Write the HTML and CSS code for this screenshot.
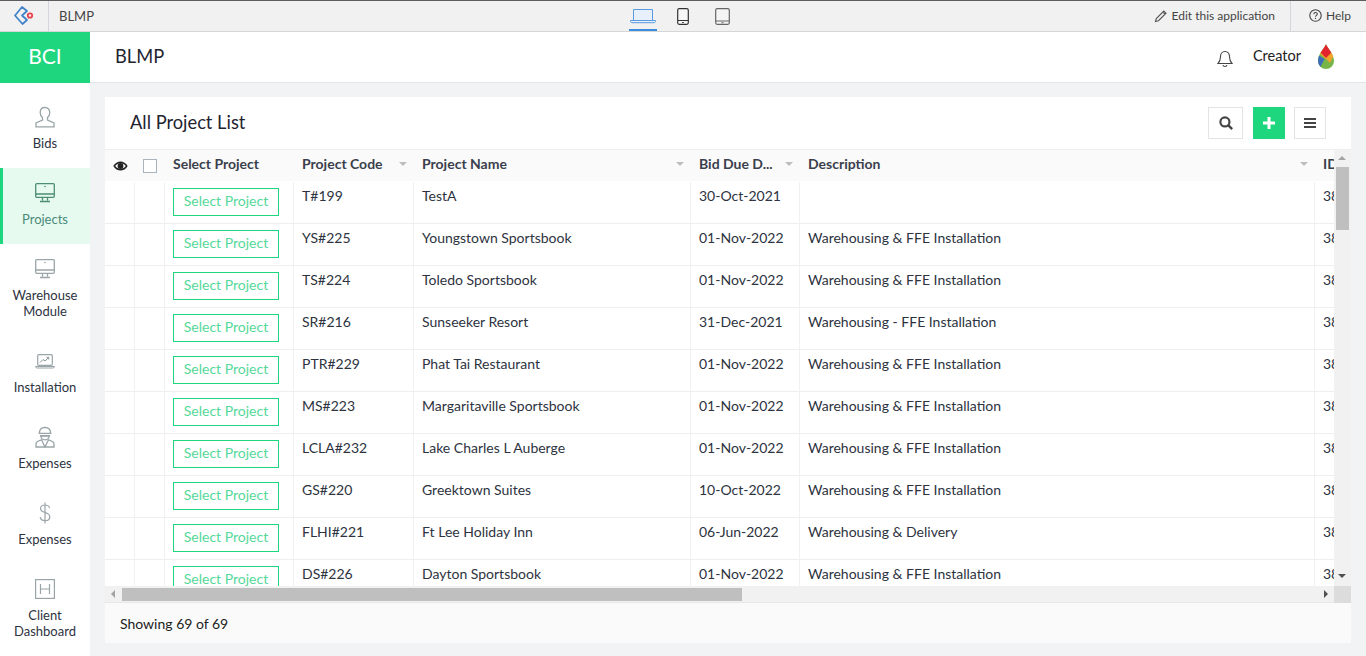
FILE: index.html
```html
<!DOCTYPE html>
<html>
  <head>
    <meta charset="utf-8">
    <title>BLMP</title>
    <link rel="stylesheet" href="styles.css">
  </head>
  <body>
    <!-- top strip -->
    <div class="topbar">
      <div class="top-logo">
        <svg width="20" height="20" viewBox="0 0 20 20"><path d="M8 1 1 9.500 8.500 18 13 14 8 9.500 13 5z" fill="none" stroke="#3f82c9" stroke-width="1.700" stroke-linejoin="round"/><circle cx="16" cy="9.500" r="2.200" fill="none" stroke="#e8424a" stroke-width="1.800"/></svg>
      </div>
      <div class="top-name">BLMP</div>
      <div class="devices">
        <div class="device active">
          <svg width="26" height="16" viewBox="0 0 26 16"><path d="M3.500 1.500h19v11h-19z" fill="#e8f1fb" stroke="#5a9be0"/><path d="M.5 12.500h25v1.200l-1 1h-23l-1-1z" fill="#e8f1fb" stroke="#5a9be0"/></svg>
        </div>
        <div class="device">
          <svg width="12" height="17" viewBox="0 0 12 17"><rect x=".7" y=".7" width="10.600" height="15.600" rx="1.500" fill="#f7f7f7" stroke="#333" stroke-width="1.200"/><path d="M1 12.500h10" stroke="#333"/><path d="M5 14.500h2" stroke="#555"/></svg>
        </div>
        <div class="device">
          <svg width="15" height="17" viewBox="0 0 15 17"><rect x=".7" y=".7" width="13.600" height="15.600" rx="1.500" fill="#f5f5f5" stroke="#666" stroke-width="1.200"/><path d="M1 13h13" stroke="#666"/><path d="M6.500 14.700h2" stroke="#666"/></svg>
        </div>
      </div>
      <div class="top-edit">
        <svg width="14" height="14" viewBox="0 0 14 14"><path d="M1.500 12.500l.8-3L9.800 2l2.200 2.200-7.500 7.500zM8.800 3l2.200 2.200" fill="none" stroke="#555" stroke-width="1.100"/></svg>
        <span>Edit this application</span>
      </div>
      <div class="top-help">
        <svg width="13" height="13" viewBox="0 0 13 13"><circle cx="6.500" cy="6.500" r="5.700" fill="none" stroke="#444" stroke-width="1.100"/><path d="M4.800 5.200c0-2.200 3.500-2.200 3.500-.1 0 1.300-1.800 1.300-1.800 2.700" fill="none" stroke="#444" stroke-width="1.100"/><path d="M6.500 8.800v1.200" stroke="#444" stroke-width="1.100"/></svg>
        <span>Help</span>
      </div>
    </div>

    <!-- app header -->
    <div class="header">
      <div class="brand">BCI</div>
      <div class="app-name">BLMP</div>
      <div class="header-right">
        <svg class="bell" width="16" height="18" viewBox="0 0 16 18"><path d="M8 1.500c-3 0-4.500 2.300-4.500 5 0 4-1 5.500-2.500 7h14c-1.500-1.500-2.500-3-2.500-7 0-2.700-1.500-5-4.500-5zM6 15c.3 2 3.700 2 4 0" fill="none" stroke="#444" stroke-width="1.100"/></svg>
        <span class="creator">Creator</span>
        <svg class="drop" width="16" height="25" viewBox="0 0 16 25">
          <clipPath id="dropShape"><path d="M8 0C10 5 16 10 16 17A8 8 0 0 1 0 17C0 10 6 5 8 0z"/></clipPath>
          <g clip-path="url(#dropShape)">
            <path d="M0 0h16v25H0z" fill="#77b548"/>
            <path d="M0 11 6.500 15 2 24 0 24z" fill="#3d6fb8"/>
            <path d="M1 9 8 15 12 19 16 11 12 7 3 7z" fill="#f0a42c"/>
            <path d="M8 0 14 8 8 14 2 8z" fill="#e3262e"/>
          </g>
        </svg>
      </div>
    </div>

    <div class="main">
      <!-- left menu -->
      <div class="sidebar">
        <div class="nav-item">
          <svg width="20" height="22" viewBox="0 0 20 22"><path d="M10 1.500c-3 0-4.800 2.200-4.800 5 0 2.300 1 4 2.300 5v2.500L1 17v3.800h18V17l-6.500-3v-2.500c1.300-1 2.300-2.700 2.300-5 0-2.800-1.800-5-4.800-5z" fill="none" stroke="#9aa5a8" stroke-width="1.300"/></svg>
          <div class="nav-label">Bids</div>
        </div>
        <div class="nav-item active">
          <svg width="20" height="20" viewBox="0 0 20 20"><rect x=".7" y=".7" width="18.600" height="13.600" rx="1" fill="none" stroke="#4e8f73" stroke-width="1.300"/><path d="M1 11h18M7.500 14.500v3M12.500 14.500v3M5 18.500h10" stroke="#4e8f73" stroke-width="1.300"/><circle cx="10" cy="3.500" r=".8" fill="#4e8f73"/></svg>
          <div class="nav-label">Projects</div>
        </div>
        <div class="nav-item">
          <svg width="20" height="20" viewBox="0 0 20 20"><rect x=".7" y=".7" width="18.600" height="13.600" rx="1" fill="none" stroke="#9aa5a8" stroke-width="1.300"/><path d="M1 11h18M7.500 14.500v3M12.500 14.500v3M5 18.500h10" stroke="#9aa5a8" stroke-width="1.300"/><circle cx="10" cy="3.500" r=".8" fill="#9aa5a8"/></svg>
          <div class="nav-label">Warehouse Module</div>
        </div>
        <div class="nav-item">
          <svg width="20" height="16" viewBox="0 0 20 16"><rect x="2.700" y="1.700" width="14.600" height="10.600" rx="1" fill="none" stroke="#9aa5a8" stroke-width="1.200"/><path d="M.5 13.500h19l-1 1.500h-17z" fill="none" stroke="#9aa5a8"/><path d="M5 9.500l3-3 2 1.500 3.500-3.500M11.500 4.300h2.200v2.200" fill="none" stroke="#8a9598"/></svg>
          <div class="nav-label">Installation</div>
        </div>
        <div class="nav-item">
          <svg width="20" height="21" viewBox="0 0 20 21"><path d="M4.500 7.500C4 2.800 6.500 1 10 1s6 1.800 5.500 6.500M3.500 6.800h13M5.500 8.500c.3 3.200 2.200 4.800 4.500 4.800s4.200-1.600 4.500-4.800" fill="none" stroke="#9aa5a8" stroke-width="1.300"/><path d="M5.500 8.500h9v1.800h-9z" fill="#9aa5a8"/><path d="M1 20.500v-3c0-2 3-3.500 5.500-4.200L10 20.500l3.500-7.200c2.500.7 5.500 2.200 5.500 4.200v3z" fill="none" stroke="#9aa5a8" stroke-width="1.300"/></svg>
          <div class="nav-label">Expenses</div>
        </div>
        <div class="nav-item">
          <svg width="12" height="22" viewBox="0 0 12 22"><path d="M10.500 6c-.3-2-2-3-4.500-3S1.500 4.300 1.500 6.500 3.500 9.800 6 10.500s4.800 1.700 4.800 4.200S8.700 18.700 6 18.700s-4.500-1.300-4.800-3.500M6 .5v21" fill="none" stroke="#9aa5a8" stroke-width="1.200"/></svg>
          <div class="nav-label">Expenses</div>
        </div>
        <div class="nav-item">
          <svg width="20" height="20" viewBox="0 0 20 20"><rect x=".6" y=".6" width="18.800" height="18.800" fill="none" stroke="#9aa5a8" stroke-width="1.200"/><path d="M5.500 5v10M14.500 5v10M5.500 10h9" fill="none" stroke="#9aa5a8" stroke-width="1.200"/></svg>
          <div class="nav-label">Client Dashboard</div>
        </div>
      </div>

      <div class="content">
        <div class="card">
          <div class="card-head">
            <div class="card-title">All Project List</div>
            <div class="tools">
              <div class="tool tool-search">
                <svg width="14" height="14" viewBox="0 0 13 13"><circle cx="5.500" cy="5.500" r="4.200" fill="none" stroke="#444" stroke-width="2"/><path d="M8.500 8.500l3.700 3.700" stroke="#444" stroke-width="2.200"/></svg>
              </div>
              <div class="tool tool-add">
                <svg width="12" height="12" viewBox="0 0 12 12"><path d="M6 0v12M0 6h12" stroke="#fff" stroke-width="3"/></svg>
              </div>
              <div class="tool tool-menu">
                <svg width="12" height="10" viewBox="0 0 12 10"><path d="M0 1h12M0 5h12M0 9h12" stroke="#444" stroke-width="1.800"/></svg>
              </div>
            </div>
          </div>

          <div class="grid-wrap">
            <div class="table-view">
              <table class="list">
                <colgroup>
                  <col class="c-eye"><col class="c-check"><col class="c-select"><col class="c-code"><col class="c-name"><col class="c-date"><col class="c-desc"><col class="c-id">
                </colgroup>
                <thead>
                  <tr>
                    <th class="center"><svg width="15" height="10" viewBox="0 0 15 10"><path d="M.3 5c3.500-6 10.900-6 14.400 0-3.500 6-10.900 6-14.400 0z" fill="#222"/><path d="M2.200 5c2.800-3.700 7.800-3.700 10.600 0-2.800 3.700-7.800 3.700-10.600 0z" fill="#fff"/><circle cx="7.500" cy="5" r="2.900" fill="#222"/></svg></th>
                    <th class="center"><span class="checkbox"></span></th>
                    <th><div class="th-text">Select Project</div></th>
                    <th><div class="th-in">Project Code<i class="caret"></i></div></th>
                    <th><div class="th-in">Project Name<i class="caret"></i></div></th>
                    <th><div class="th-in">Bid Due D...<i class="caret"></i></div></th>
                    <th><div class="th-in">Description<i class="caret"></i></div></th>
                    <th><div class="th-text">ID</div></th>
                  </tr>
                </thead>
                <tbody>
                  <tr><td></td><td></td><td><a class="pick">Select Project</a></td><td>T#199</td><td>TestA</td><td>30-Oct-2021</td><td></td><td>3800000</td></tr>
                  <tr><td></td><td></td><td><a class="pick">Select Project</a></td><td>YS#225</td><td>Youngstown Sportsbook</td><td>01-Nov-2022</td><td>Warehousing &amp; FFE Installation</td><td>3800000</td></tr>
                  <tr><td></td><td></td><td><a class="pick">Select Project</a></td><td>TS#224</td><td>Toledo Sportsbook</td><td>01-Nov-2022</td><td>Warehousing &amp; FFE Installation</td><td>3800000</td></tr>
                  <tr><td></td><td></td><td><a class="pick">Select Project</a></td><td>SR#216</td><td>Sunseeker Resort</td><td>31-Dec-2021</td><td>Warehousing - FFE Installation</td><td>3800000</td></tr>
                  <tr><td></td><td></td><td><a class="pick">Select Project</a></td><td>PTR#229</td><td>Phat Tai Restaurant</td><td>01-Nov-2022</td><td>Warehousing &amp; FFE Installation</td><td>3800000</td></tr>
                  <tr><td></td><td></td><td><a class="pick">Select Project</a></td><td>MS#223</td><td>Margaritaville Sportsbook</td><td>01-Nov-2022</td><td>Warehousing &amp; FFE Installation</td><td>3800000</td></tr>
                  <tr><td></td><td></td><td><a class="pick">Select Project</a></td><td>LCLA#232</td><td>Lake Charles L Auberge</td><td>01-Nov-2022</td><td>Warehousing &amp; FFE Installation</td><td>3800000</td></tr>
                  <tr><td></td><td></td><td><a class="pick">Select Project</a></td><td>GS#220</td><td>Greektown Suites</td><td>10-Oct-2022</td><td>Warehousing &amp; FFE Installation</td><td>3800000</td></tr>
                  <tr><td></td><td></td><td><a class="pick">Select Project</a></td><td>FLHI#221</td><td>Ft Lee Holiday Inn</td><td>06-Jun-2022</td><td>Warehousing &amp; Delivery</td><td>3800000</td></tr>
                  <tr><td></td><td></td><td><a class="pick">Select Project</a></td><td>DS#226</td><td>Dayton Sportsbook</td><td>01-Nov-2022</td><td>Warehousing &amp; FFE Installation</td><td>3800000</td></tr>
                </tbody>
              </table>
            </div>
            <!-- scrollbars -->
            <div class="vbar">
              <i class="arrow-up"></i>
              <div class="vthumb"></div>
              <i class="arrow-down"></i>
            </div>
            <div class="hbar">
              <i class="arrow-left"></i>
              <div class="htrack"><div class="hthumb"></div></div>
              <i class="arrow-right"></i>
            </div>
            <div class="corner"></div>
          </div>

          <div class="card-foot">Showing 69 of 69</div>
        </div>
      </div>
    </div>
  </body>
</html>
```

FILE: styles.css
```css
* {
  box-sizing: border-box;
}
html, body {
  margin: 0;
  height: 656px;
  overflow: hidden;
}
body {
  font-family: Lato, "Liberation Sans", sans-serif;
  font-size: 14px;
  color: #2d3340;
  background: #f2f3f5;
  display: flex;
  flex-direction: column;
}

/* top strip */
.topbar {
  height: 32px;
  display: flex;
  align-items: center;
  background: #f1f1f1;
  border-top: 1px solid #5c5c5c;
  border-bottom: 1px solid #d6d6d6;
  position: relative;
  font-size: 12px;
  color: #444;
}
.top-logo {
  width: 49px;
  height: 30px;
  display: flex;
  align-items: center;
  justify-content: center;
  border-right: 1px solid #d4d6de;
}
.top-name {
  margin-left: 10px;
  font-size: 13px;
  color: #444;
}
.devices {
  position: absolute;
  left: 629px;
  top: 0;
  height: 30px;
  display: flex;
}
.device {
  height: 30px;
  display: flex;
  align-items: center;
  justify-content: center;
  width: 28px;
  margin-right: 11px;
}
.device:nth-child(2) {
  margin-left: 1px;
}
.device.active {
  border-bottom: 2px solid #3b8de0;
  padding-top: 2px;
}
.top-edit {
  margin-left: auto;
  height: 30px;
  padding-right: 15px;
  padding-bottom: 1px;
  display: flex;
  align-items: center;
  gap: 4px;
  border-right: 1px solid #d4d6de;
}
.top-help {
  width: 75px;
  padding-left: 18px;
  padding-bottom: 1px;
  display: flex;
  align-items: center;
  gap: 4px;
}

/* app header */
.header {
  height: 51px;
  display: flex;
  align-items: stretch;
  background: #fff;
  border-bottom: 1px solid #e4e5e7;
}
.brand {
  width: 90px;
  margin-bottom: -1px;
  padding-bottom: 5px;
  background: #1ed67e;
  color: #fff;
  font-size: 21px;
  display: flex;
  align-items: center;
  justify-content: center;
}
.app-name {
  margin-left: 25px;
  font-size: 18.300px;
  color: #1f2430;
  line-height: 48px;
}
.header-right {
  margin-left: auto;
  padding-right: 32px;
  padding-bottom: 3px;
  display: flex;
  align-items: center;
}
.bell {
  margin-top: 6px;
  margin-right: 20px;
}
.creator {
  font-size: 14.500px;
  color: #222;
  margin-right: 17px;
}
.drop {
  margin-top: 1px;
}

/* left menu */
.main {
  flex: 1;
  display: flex;
  min-height: 0;
}
.sidebar {
  width: 90px;
  background: #fff;
  padding-top: 9px;
  flex: none;
}
.nav-item {
  height: 76px;
  padding: 0 8px;
  display: flex;
  flex-direction: column;
  align-items: center;
  text-align: center;
  justify-content: flex-start;
}
.nav-item svg {
  height: 28px;
  margin-top: 11px;
  margin-bottom: 4px;
  flex: none;
}
.nav-item:nth-child(3), .nav-item:nth-child(7) {
  height: 92px;
}
.nav-item.active {
  background: #e6faf0;
  border-left: 3px solid #1ed67e;
  padding-left: 5px;
  padding-right: 8px;
  color: #4b8a78;
}
.nav-label {
  font-size: 13px;
  line-height: 16px;
}

/* card */
.content {
  flex: 1;
  padding: 14px 15px 13px;
  min-width: 0;
}
.card {
  height: 546px;
  background: #fff;
  display: flex;
  flex-direction: column;
}
.card-head {
  height: 53px;
  flex: none;
  display: flex;
  align-items: flex-start;
  padding: 10px 25px 0;
  border-bottom: 1px solid #eee;
}
.card-title {
  font-size: 18.300px;
  line-height: 30px;
  color: #1f2430;
}
.tools {
  margin-left: auto;
  display: flex;
}
.tool {
  height: 32px;
  display: flex;
  align-items: center;
  justify-content: center;
  border: 1px solid #e3e3e3;
}
.tool-search {
  width: 35px;
}
.tool-add {
  width: 32px;
  margin-left: 10px;
  margin-right: 9px;
  background: #1ed67e;
  border-color: #1ed67e;
}
.tool-menu {
  width: 32px;
}

/* table with its scrollbars */
.grid-wrap {
  flex: 1;
  min-height: 0;
  display: grid;
  grid-template-columns: 1fr 17px;
  grid-template-rows: 436px 17px;
}
.table-view {
  overflow: hidden;
  min-width: 0;
}
.list {
  table-layout: fixed;
  width: 1289px;
  border-collapse: separate;
  border-spacing: 0;
}
.c-eye, .c-check { width: 30px; }
.c-select { width: 129px; }
.c-code { width: 120px; }
.c-name { width: 277px; }
.c-date { width: 109px; }
.c-desc { width: 515px; }
.c-id { width: 79px; }
.list th {
  height: 32px;
  padding: 0 8px;
  background: #fafafa;
  border-bottom: 1px solid #fff;
  font-weight: 700;
  font-size: 14px;
  text-align: left;
  white-space: nowrap;
  overflow: hidden;
  color: #3a3f4c;
}
.list th.center {
  padding: 0;
  text-align: center;
}
.list th svg {
  display: block;
  margin: 0 auto;
}
.th-text, .th-in {
  padding-bottom: 5px;
}
.th-in {
  display: flex;
  align-items: center;
  justify-content: space-between;
}
.caret {
  width: 0;
  height: 0;
  border-left: 4px solid transparent;
  border-right: 4px solid transparent;
  border-top: 4px solid #bdbdbd;
  margin-top: 2px;
  margin-right: -1px;
}
.checkbox {
  display: block;
  width: 14px;
  height: 14px;
  margin: 0 auto;
  background: #fff;
  border: 1px solid #a9b4bf;
}
.list td {
  height: 42px;
  padding: 6px 8px 0;
  vertical-align: top;
  line-height: 16px;
  white-space: nowrap;
  overflow: hidden;
  border-bottom: 1px solid #eee;
  border-right: 1px solid #f1f1f1;
}
.pick {
  display: block;
  height: 28px;
  width: 106px;
  border: 1px solid #1ed67e;
  color: #55d99a;
  text-align: center;
  line-height: 24px;
}

/* scrollbars */
.vbar {
  grid-column: 2;
  grid-row: 1;
  background: #f1f1f1;
  position: relative;
}
.vthumb {
  position: absolute;
  left: 2px;
  top: 17px;
  width: 13px;
  height: 63px;
  background: #bfbfbf;
}
.hbar {
  grid-column: 1;
  grid-row: 2;
  background: #f1f1f1;
  border-bottom: 1px solid #e8e8e8;
  position: relative;
}
.htrack {
  position: absolute;
  left: 17px;
  top: 2px;
  width: 620px;
}
.hthumb {
  height: 13px;
  background: #bfbfbf;
}
.corner {
  grid-column: 2;
  grid-row: 2;
  background: #dcdcdc;
}
.arrow-up, .arrow-down, .arrow-left, .arrow-right {
  position: absolute;
  width: 0;
  height: 0;
}
.arrow-up {
  left: 4px;
  top: 6px;
  border-left: 4px solid transparent;
  border-right: 4px solid transparent;
  border-bottom: 4px solid #a3a3a3;
}
.arrow-down {
  left: 4px;
  bottom: 8px;
  border-left: 4px solid transparent;
  border-right: 4px solid transparent;
  border-top: 4px solid #505050;
}
.arrow-left {
  left: 6px;
  top: 4px;
  border-top: 4px solid transparent;
  border-bottom: 4px solid transparent;
  border-right: 4px solid #a3a3a3;
}
.arrow-right {
  right: 6px;
  top: 4px;
  border-top: 4px solid transparent;
  border-bottom: 4px solid transparent;
  border-left: 4px solid #505050;
}

.card-foot {
  flex: none;
  height: 40px;
  padding-left: 15px;
  display: flex;
  align-items: center;
  background: #fafafa;
  color: #222;
  font-size: 14px;
}
```
